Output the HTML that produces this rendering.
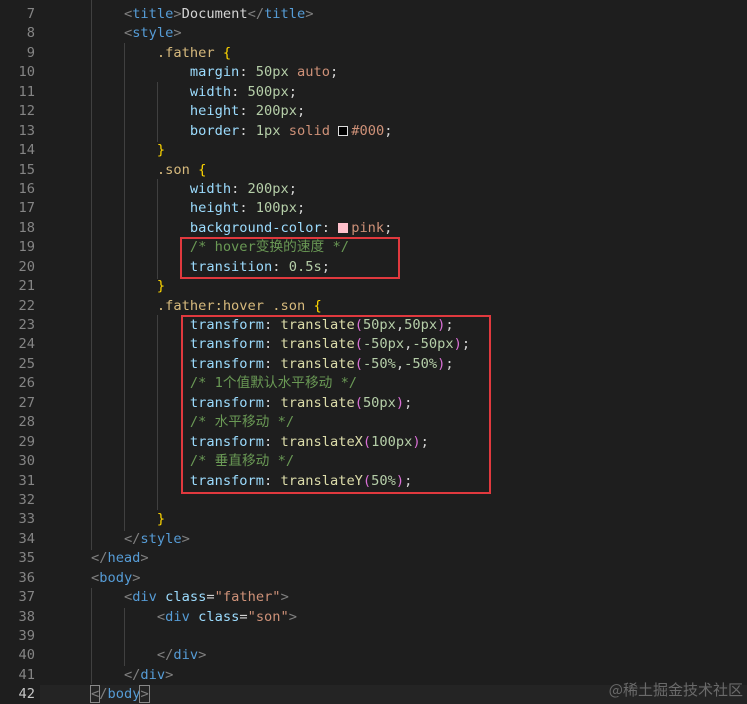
<!DOCTYPE html>
<html><head><meta charset="utf-8"><style>
html,body{margin:0;padding:0;background:#1e1e1e;width:747px;height:704px;overflow:hidden;position:relative}
.code{position:absolute;left:58px;top:5px;margin:0;font-family:"DejaVu Sans Mono","Noto Sans CJK SC",monospace;font-size:13.7px;line-height:19.44px;color:#d4d4d4;white-space:pre}
.ln{position:absolute;left:0;top:5px;width:35px;text-align:right;font-family:"DejaVu Sans Mono",monospace;font-size:13.7px;line-height:19.44px;color:#858585;white-space:pre}
.t{color:#569cd6}.b{color:#808080}.p{color:#9cdcfe}.n{color:#b5cea8}.s{color:#ce9178}.sel{color:#d7ba7d}.y{color:#ffd700}.c{color:#6a9955}.f{color:#dcdcaa}.m{color:#da70d6}
.g{position:absolute;width:1px;background:#404040}
.box{position:absolute;border:2.5px solid #e0393e;box-sizing:border-box}
.sw{display:inline-block;width:10px;height:10px;border:1px solid #ccc;vertical-align:-1px;margin-right:3px;box-sizing:border-box}
.wm{position:absolute;right:4px;top:679px;font-family:"Noto Sans CJK SC",sans-serif;font-size:15px;color:#6a6a6a}
</style></head><body>
<div class="g" style="left:91px;top:0;height:550px"></div>
<div class="g" style="left:124px;top:43px;height:488px"></div>
<div class="g" style="left:157px;top:82px;height:60px"></div>
<div class="g" style="left:157px;top:179px;height:100px"></div>
<div class="g" style="left:157px;top:315px;height:195px"></div>
<div class="g" style="left:91px;top:588px;height:96px"></div>
<div class="g" style="left:124px;top:608px;height:58px"></div>
<div style="position:absolute;left:40px;top:685px;width:707px;height:19px;background:#242424"></div>
<div class="ln">7
8
9
10
11
12
13
14
15
16
17
18
19
20
21
22
23
24
25
26
27
28
29
30
31
32
33
34
35
36
37
38
39
40
41
<span style="color:#c6c6c6">42</span></div>
<pre class="code">        <span class="b">&lt;</span><span class="t">title</span><span class="b">&gt;</span>Document<span class="b">&lt;/</span><span class="t">title</span><span class="b">&gt;</span>
        <span class="b">&lt;</span><span class="t">style</span><span class="b">&gt;</span>
            <span class="sel">.father</span> <span class="y">{</span>
                <span class="p">margin</span>: <span class="n">50px</span> <span class="s">auto</span>;
                <span class="p">width</span>: <span class="n">500px</span>;
                <span class="p">height</span>: <span class="n">200px</span>;
                <span class="p">border</span>: <span class="n">1px</span> <span class="s">solid</span> <span class="sw" style="background:#000;border-color:#ddd"></span><span class="s">#000</span>;
            <span class="y">}</span>
            <span class="sel">.son</span> <span class="y">{</span>
                <span class="p">width</span>: <span class="n">200px</span>;
                <span class="p">height</span>: <span class="n">100px</span>;
                <span class="p">background-color</span>: <span class="sw" style="background:#ffc0cb;border-color:#ffc0cb"></span><span class="s">pink</span>;
                <span class="c">/* hover变换的速度 */</span>
                <span class="p">transition</span>: <span class="n">0.5s</span>;
            <span class="y">}</span>
            <span class="sel">.father:hover .son</span> <span class="y">{</span>
                <span class="p">transform</span>: <span class="f">translate</span><span class="m">(</span><span class="n">50px</span>,<span class="n">50px</span><span class="m">)</span>;
                <span class="p">transform</span>: <span class="f">translate</span><span class="m">(</span><span class="n">-50px</span>,<span class="n">-50px</span><span class="m">)</span>;
                <span class="p">transform</span>: <span class="f">translate</span><span class="m">(</span><span class="n">-50%</span>,<span class="n">-50%</span><span class="m">)</span>;
                <span class="c">/* 1个值默认水平移动 */</span>
                <span class="p">transform</span>: <span class="f">translate</span><span class="m">(</span><span class="n">50px</span><span class="m">)</span>;
                <span class="c">/* 水平移动 */</span>
                <span class="p">transform</span>: <span class="f">translateX</span><span class="m">(</span><span class="n">100px</span><span class="m">)</span>;
                <span class="c">/* 垂直移动 */</span>
                <span class="p">transform</span>: <span class="f">translateY</span><span class="m">(</span><span class="n">50%</span><span class="m">)</span>;

            <span class="y">}</span>
        <span class="b">&lt;/</span><span class="t">style</span><span class="b">&gt;</span>
    <span class="b">&lt;/</span><span class="t">head</span><span class="b">&gt;</span>
    <span class="b">&lt;</span><span class="t">body</span><span class="b">&gt;</span>
        <span class="b">&lt;</span><span class="t">div</span> <span class="p">class</span>=<span class="s">"father"</span><span class="b">&gt;</span>
            <span class="b">&lt;</span><span class="t">div</span> <span class="p">class</span>=<span class="s">"son"</span><span class="b">&gt;</span>

            <span class="b">&lt;/</span><span class="t">div</span><span class="b">&gt;</span>
        <span class="b">&lt;/</span><span class="t">div</span><span class="b">&gt;</span>
    <span class="b" style="outline:1px solid #888">&lt;</span><span class="b">/</span><span class="t">body</span><span class="b" style="outline:1px solid #888">&gt;</span></pre>
<div class="box" style="left:180px;top:237px;width:220px;height:42px"></div>
<div class="box" style="left:181px;top:315px;width:310px;height:179px"></div>
<div class="wm">@稀土掘金技术社区</div>
</body></html>
